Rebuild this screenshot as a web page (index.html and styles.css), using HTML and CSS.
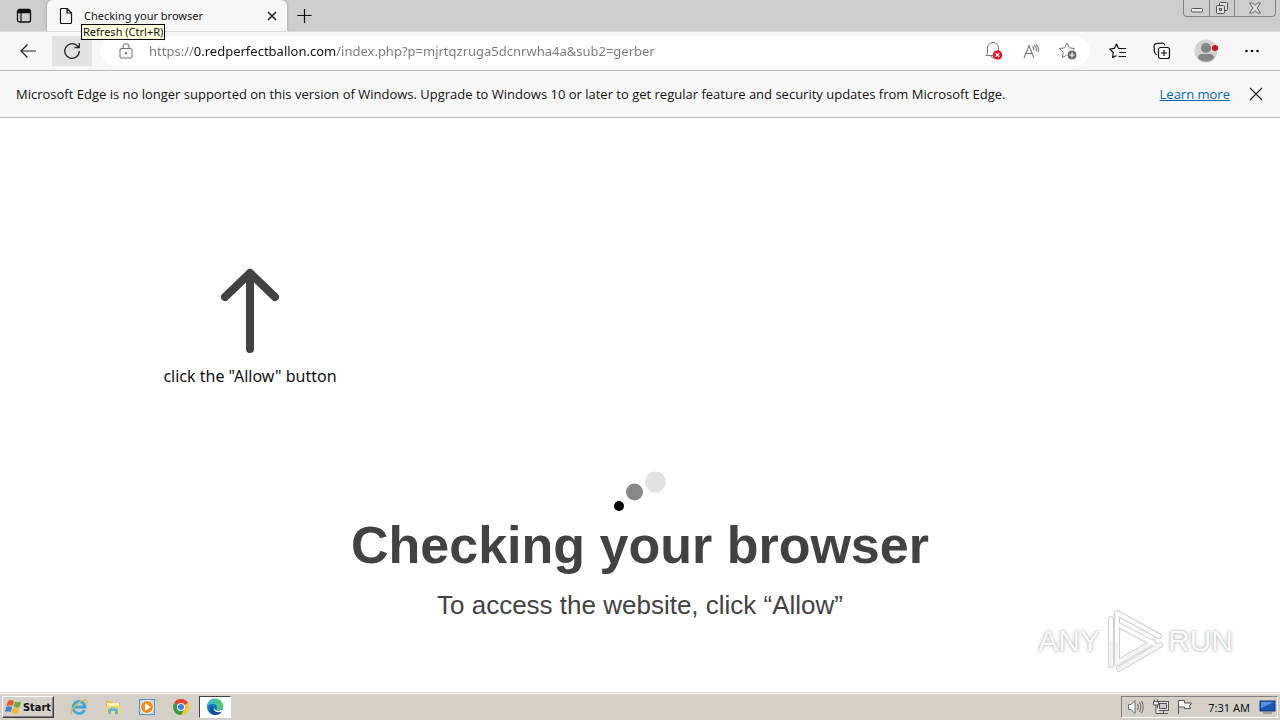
FILE: index.html
```html
<!DOCTYPE html>
<html lang="en">
<head>
<meta charset="utf-8">
<title>Checking your browser</title>
<link rel="stylesheet" href="styles.css">
</head>
<body>
<div class="desktop">
  <header class="tabstrip">
    <button class="tab-actions" aria-label="Tab actions"><svg width="16" height="16" viewBox="0 0 16 16" fill="none" stroke="#111"><rect x="1.5" y="1.5" width="13" height="12.500" rx="2" stroke-width="1.3"/><path d="M2 3.500h12" stroke-width="3.500"/><path d="M5 5v9" stroke-width="1.200"/></svg></button>
    <div class="tab">
      <svg width="14" height="18" viewBox="0 0 14 18" fill="none" stroke="#111" stroke-width="1.2" stroke-linejoin="round"><path d="M1.500 2.500Q1.500 1.500 2.500 1.500H8L12.500 6V15.500Q12.500 16.500 11.500 16.500H2.500Q1.500 16.500 1.500 15.500ZM8 1.500V6h4.500"/></svg>
      <span class="tab-title">Checking your browser</span>
      <button class="tab-close" aria-label="Close tab"><svg width="10" height="10" viewBox="0 0 10 10" stroke="#111" stroke-width="1.400"><path d="M1 1l8 8M9 1L1 9"/></svg></button>
    </div>
    <button class="new-tab" aria-label="New tab"><svg width="16" height="16" viewBox="0 0 16 16" stroke="#111" stroke-width="1.2"><path d="M7.500 1v14M.5 7.500h14"/></svg></button>
    <div class="window-controls">
      <button aria-label="Minimize"><svg width="14" height="14" viewBox="0 0 14 14"><rect x="1.500" y="7.500" width="11" height="3.500" rx="1" fill="#eee" stroke="#555"/></svg></button>
      <button aria-label="Restore"><svg width="14" height="14" viewBox="0 0 14 14" fill="#ddd" stroke="#555"><rect x="4.500" y="1.500" width="8" height="8" rx="1"/><rect x="1.500" y="4.500" width="8" height="8" rx="1"/><rect x="4.500" y="7.500" width="2" height="2"/></svg></button>
      <button class="wide" aria-label="Close"><svg width="14" height="14" viewBox="0 0 14 14" stroke-linejoin="round"><path d="M1.500 2h3L7 4.500 9.500 2h3L9 7l3.500 5h-3L7 9.500 4.500 12h-3L5 7Z" fill="#e4e4e4" stroke="#666"/></svg></button>
    </div>
    <div class="tooltip" role="tooltip">Refresh (Ctrl+R)</div>
  </header>

  <nav class="toolbar">
    <button class="nav-button" aria-label="Back"><svg width="18" height="16" viewBox="0 0 18 16" fill="none" stroke="#222" stroke-width="1.200"><path d="M17 8H2M8.500 1.500L2 8l6.500 6.500"/></svg></button>
    <button class="nav-button hovered" aria-label="Refresh"><svg width="18" height="18" viewBox="0 0 18 18" fill="none" stroke="#222" stroke-width="1.300"><path d="M16.300 9a7.300 7.300 0 1 1-2.500-5.500L16 5.500M16.200 1v4.700h-4.700"/></svg></button>
    <form class="address">
      <svg width="14" height="16" viewBox="0 0 14 16" fill="none" stroke="#777" stroke-width="1.100"><rect x="1" y="5.500" width="12" height="9.500" rx="1.500"/><path d="M4 5.500V3.800a3 3 0 0 1 6 0v1.700"/><circle cx="7" cy="10.300" r=".7" fill="#777"/></svg>
      <input class="url" type="text" aria-label="Address" value="https://0.redperfectballon.com/index.php?p=mjrtqzruga5dcnrwha4a&amp;sub2=gerber">
      <button type="button" aria-label="Notifications blocked"><svg width="20" height="20" viewBox="0 0 20 20"><path d="M2 14.500h14L14.500 12V7a5.500 5.500 0 0 0-11 0v5ZM7 15q1 2.500 3 2" fill="none" stroke="#777"/><circle cx="13.500" cy="14" r="4.700" fill="#e81123"/><path d="M11.700 12.200l3.600 3.600M15.300 12.200l-3.600 3.600" stroke="#fff" stroke-width="1.300"/></svg></button>
      <button type="button" aria-label="Read aloud"><svg width="18" height="18" viewBox="0 0 18 18" fill="none" stroke="#777" stroke-width="1.100"><path d="M2 16L7 3.500 12 16M3.700 11.500h6.600M10.500 4.500q1.500 1.500 1 3.500M12 3q3 2.500 2 6M14 2q3.500 3.500 2 8"/></svg></button>
      <button type="button" aria-label="Add to favorites"><svg width="20" height="20" viewBox="0 0 20 20"><path d="M9 2l2.300 4.800 5.200.8-3.700 3.700.8 5.200L9 14l-4.700 2.500.9-5.200-3.800-3.700 5.300-.8Z" fill="none" stroke="#777" stroke-linejoin="round"/><circle cx="14" cy="14" r="5" fill="#666" stroke="#fff"/><path d="M11.500 14h5M14 11.500v5" stroke="#fff" stroke-width="1.200"/></svg></button>
    </form>
    <div class="tools">
      <button aria-label="Favorites"><svg width="18" height="18" viewBox="0 0 18 18" fill="none" stroke="#111" stroke-width="1.200" stroke-linejoin="round"><path d="M11 6.500L9.500 6.300 7.500 2 5.500 6.300.8 7l3.500 3.500-.8 5.200 4-2.200M11 6.500h6M10.500 10.500H17M9.500 14.500H17"/></svg></button>
      <button aria-label="Collections"><svg width="18" height="18" viewBox="0 0 18 18" fill="none" stroke="#111" stroke-width="1.200"><path d="M4 13q-2-.5-2.500-3L1 4Q1 2 3 1.700L9 1q2.500 0 3 2.500"/><rect x="5.500" y="5.500" width="11" height="11" rx="2"/><path d="M11 8v6M8 11h6"/></svg></button>
      <button aria-label="Profile"><svg width="26" height="24" viewBox="0 0 26 24"><circle cx="12" cy="12" r="11.500" fill="#d2d2d0"/><circle cx="12" cy="9" r="5" fill="#858585"/><path d="M4 19.500Q4 15 8 15h8q4 0 4 4.500Q12 26 4 19.500Z" fill="#858585"/><circle cx="21" cy="9" r="3" fill="#d90b17"/></svg></button>
      <button aria-label="Settings and more"><svg width="16" height="4" viewBox="0 0 16 4" fill="#111"><circle cx="2.500" cy="2" r="1.300"/><circle cx="8" cy="2" r="1.300"/><circle cx="13.500" cy="2" r="1.300"/></svg></button>
    </div>
  </nav>

  <section class="notice">
    <p>Microsoft Edge is no longer supported on this version of Windows. Upgrade to Windows 10 or later to get regular feature and security updates from Microsoft Edge.</p>
    <a href="#">Learn more</a>
    <button aria-label="Dismiss"><svg width="14" height="14" viewBox="0 0 14 14" stroke="#222" stroke-width="1.200"><path d="M1 1l12 12M13 1L1 13"/></svg></button>
  </section>

  <main class="page">
    <div class="prompt">
      <svg width="60" height="88" viewBox="0 0 60 88" fill="none" stroke="#424242" stroke-width="8" stroke-linecap="round" stroke-linejoin="round"><path d="M30 82V6M5 30L30 6l25 24"/></svg>
      <p>click the "Allow" button</p>
    </div>
    <div class="status">
      <svg width="54" height="42" viewBox="0 0 54 42"><circle cx="6" cy="36" r="5" fill="#000"/><circle cx="21.500" cy="22" r="8.500" fill="#888"/><circle cx="42.500" cy="12" r="10.500" fill="#e2e2e2"/></svg>
      <h1>Checking your browser</h1>
      <p>To access the website, click “Allow”</p>
    </div>
    <div class="watermark">
      <span>ANY</span>
      <svg width="60" height="66" viewBox="0 0 60 66" fill="none" stroke-linejoin="round" stroke-linecap="round">
        <path id="mark" d="M7 11v46M13 33V5L55 28M13 5v50L49 34M13 16l37 20M15 61L56 37" stroke="#d2d2d2" stroke-width="6"/>
        <path d="M7 11v46M13 33V5L55 28M13 5v50L49 34M13 16l37 20M15 61L56 37" stroke="#f4f4f4" stroke-width="4"/>
        <path d="M7 11v22M13 33V5L55 28M13 16l35 18" stroke="#fff" stroke-width="3"/>
      </svg>
      <span>RUN</span>
    </div>
  </main>

  <footer class="taskbar">
    <button class="start"><svg width="17" height="16" viewBox="0 0 17 16"><path d="M3 2q3-2 6 0L7.500 7Q5 5.500 1.500 7Z" fill="#e75b25"/><path d="M10 2.500q3 1.500 6 0L14.500 8q-3 1.500-6-.500Z" fill="#73a83b"/><path d="M1.200 8q3-1.500 6 0L5.800 13Q3 11.500 0 13Z" fill="#3983cf"/><path d="M8.200 8.500q3 2 6 .5L12.700 14q-3 1.500-6-.500Z" fill="#f4b722"/></svg>Start</button>
    <div class="pinned">
      <button aria-label="Internet Explorer"><svg width="18" height="18" viewBox="0 0 18 18" fill="none"><path d="M14.500 12A6 6 0 1 1 15 9H5" stroke="#3ba9df" stroke-width="2.800"/><path d="M2 16Q-1 13 6 7T16 2q2 1-.5 5" stroke="#e8b73c" stroke-width="1.300"/></svg></button>
      <button aria-label="File Explorer"><svg width="18" height="18" viewBox="0 0 18 18"><path d="M2 3h6l1 2h7v11H2Z" fill="#e5bd59"/><path d="M3 5h12v5H3Z" fill="#fff4b5"/><path d="M2 8h14v8H2Z" fill="#f4d878"/><path d="M4 16v-5q5-3 10 0v5h-3v-3H7v3Z" fill="#69b6dc"/></svg></button>
      <button aria-label="Media Player"><svg width="18" height="18" viewBox="0 0 18 18"><rect x="1.500" y="1.500" width="15" height="15" fill="#b7d8ef" stroke="#5793be"/><circle cx="9" cy="9" r="6.500" fill="#f28b19" stroke="#fff"/><path d="M7 5v8l6-4Z" fill="#fff"/></svg></button>
      <button aria-label="Chrome"><svg width="18" height="18" viewBox="0 0 18 18"><circle cx="9" cy="9" r="8" fill="#f7c52d"/><path d="M9 9L2.100 5A8 8 0 0 1 16 5Z" fill="#df4132"/><path d="M9 9L2.100 5A8 8 0 0 0 9 17l3.500-6Z" fill="#349b50"/><circle cx="9" cy="9" r="4" fill="#fff"/><circle cx="9" cy="9" r="3" fill="#3d7de0"/></svg></button>
      <button class="active" aria-label="Microsoft Edge"><svg width="18" height="18" viewBox="0 0 18 18"><circle cx="9" cy="9" r="8" fill="#1676c4"/><path d="M1 9A8 8 0 0 1 17 8q0 4-5 4-2 0-1-2 0-4-4-4Q3 6 1 9Z" fill="#36bdc2"/><path d="M9 1q7 0 8 7 0 4-5 4-2 0-1-2 1-4-2-5Z" fill="#52c875"/><path d="M7 8q-2 5 4 6 3 0 5-1-2 4-7 4-5-1-5-6 0-3 3-3Z" fill="#124d99"/><path d="M8 10q1 4 8 2l1 1q-6 3-9-1Z" fill="#fff"/></svg></button>
    </div>
    <div class="tray">
      <svg width="18" height="16" viewBox="0 0 18 16" fill="#fff" stroke="#666"><path d="M1.500 5.500H4l4-4v13l-4-4H1.500Z"/><path d="M10.500 5q1.500 3 0 6M12.500 3q3 5 0 10M14.500 2q3.500 6 0 12" fill="none"/></svg>
      <svg width="16" height="16" viewBox="0 0 16 16" fill="#eee" stroke="#555"><rect x="4.500" y="2.500" width="11" height="9"/><rect x="6.500" y="4.500" width="7" height="5" fill="#ccc"/><path d="M6 14.500h9M10.500 12v2"/><path d="M.5 2.500h5V6h-5ZM1.500.5v2M4.500.5v2M3 6v8.500h4"/></svg>
      <svg width="16" height="16" viewBox="0 0 16 16" fill="#fff" stroke="#555"><path d="M1.500 15V1.500h6V4h7l-2 3 1 2.500H7.500V8h-6"/></svg>
      <time>7:31 AM</time>
      <svg width="17" height="16" viewBox="0 0 17 16"><rect x="1" y="2" width="15" height="10" fill="#1c57b5" stroke="#173975"/><path d="M2 3h13L2 9Z" fill="#5291dd"/><path d="M4 14h9" stroke="#666"/></svg>
    </div>
  </footer>
</div>
</body>
</html>
```
FILE: styles.css
```css
* { box-sizing: border-box; }
body { margin: 0; font-family: "Noto Sans", "Open Sans", sans-serif; color: #111; background: #fff; }
button { display: flex; align-items: center; justify-content: center; padding: 0; border: 0; background: transparent; font: inherit; color: inherit; }
p, h1 { margin: 0; }
svg { display: block; flex: none; }
.desktop { display: flex; flex-direction: column; min-height: 100vh; }

.tabstrip { position: relative; display: flex; height: 32px; background: #cdcdcd; border-bottom: 1px solid #d8d8d8; }
.tab-actions { width: 47px; }
.tab { display: flex; align-items: center; gap: 11px; width: 240px; padding: 0 10px 0 12px; background: #f7f7f7; border-radius: 6px 6px 0 0; box-shadow: 0 0 3px #999; clip-path: inset(0 -4px); }
.tab-title { flex: 1; font-size: 11px; white-space: nowrap; }
.new-tab { width: 35px; }
.window-controls { display: flex; align-self: flex-start; height: 17px; margin: 0 4px 0 auto; border: 1px solid #858585; border-top: 0; border-radius: 0 0 4px 4px; }
.window-controls button { width: 25px; border-left: 1px solid #858585; }
.window-controls button:first-child { border-left: 0; }
.window-controls .wide { width: 41px; }
.tooltip { position: absolute; z-index: 2; top: 24px; left: 81px; padding: 0 1px; border: 1px solid #000; background: #ffffe1; font-size: 11px; line-height: 14px; white-space: nowrap; }

.toolbar { display: flex; align-items: center; height: 39px; padding: 0 8px; background: #f7f7f7; border-bottom: 1px solid #bdbdbd; }
.nav-button { width: 40px; height: 30px; }
.nav-button.hovered { margin-left: 4px; background: #e1e1e1; }
.address { display: flex; flex: 1; align-items: center; height: 30px; margin-left: 8px; padding: 0 12px 0 19px; border-radius: 15px; background: #fff; gap: 18px; }
.url { flex: 1; min-width: 0; height: 24px; margin-left: -2px; padding: 0; border: 0; outline: 0; color: transparent; background: linear-gradient(90deg, #777 45px, #111 45px, #111 187px, #777 187px); background-clip: text; -webkit-background-clip: text; font: inherit; font-size: 13px; }
.tools { display: flex; align-items: center; gap: 20px; padding: 0 8px 0 16px; }
.tools button { min-width: 24px; }

.notice { display: flex; align-items: center; min-height: 47px; padding: 0 16px; background: #f7f7f7; border-bottom: 1px solid #bdbdbd; font-family: "Open Sans", "Noto Sans", sans-serif; font-size: 13px; line-height: 18px; }
.notice p { flex: 1; }
.notice a { margin-right: 18px; color: #0067b0; }
.notice button { width: 16px; }

.page { position: relative; flex: 1; padding-top: 149px; color: #424242; font-family: "Liberation Sans", Arial, sans-serif; }
.prompt { display: flex; flex-direction: column; align-items: center; width: 176px; margin-left: 162px; gap: 10px; font-family: "Noto Sans", sans-serif; font-size: 16px; line-height: 22px; color: #111; white-space: nowrap; }
.status { display: flex; flex-direction: column; align-items: center; margin-top: 83px; }
.status h1 { margin-top: 1px; font-size: 52px; line-height: 64px; }
.status p { margin-top: 12px; font-size: 26px; line-height: 32px; }
.watermark { position: absolute; right: 47px; bottom: 18px; display: flex; align-items: center; gap: 4px; color: #fbfbfb; font-family: "Liberation Sans Narrow", "Liberation Sans", sans-serif; font-size: 30px; text-shadow: 0 0 2px #aaa, 0 0 4px #ccc; }

.taskbar { display: flex; align-items: center; height: 28px; padding: 2px 2px 1px; border-top: 1px solid #d4d0c8; background: #d4d0c8; box-shadow: inset 0 1px #fff; font-family: "DejaVu Sans Condensed", "Noto Sans", sans-serif; font-size: 11px; }
.start { width: 52px; height: 22px; gap: 1px; border: 1px solid; border-color: #fff #404040 #404040 #fff; box-shadow: inset -1px -1px #808080; font-weight: bold; }
.pinned { display: flex; margin-left: 9px; gap: 2px; }
.pinned button { width: 32px; height: 22px; }
.pinned .active { background: #fff; border: 1px solid; border-color: #404040 #fff #fff #404040; }
.tray { display: flex; align-items: center; height: 22px; margin-left: auto; padding: 0 1px 0 5px; gap: 8px; border: 1px solid; border-color: #808080 #fff #fff #808080; font-family: "Noto Sans", sans-serif; }
.tray time { margin: 0 1px 0 7px; white-space: nowrap; }
```
